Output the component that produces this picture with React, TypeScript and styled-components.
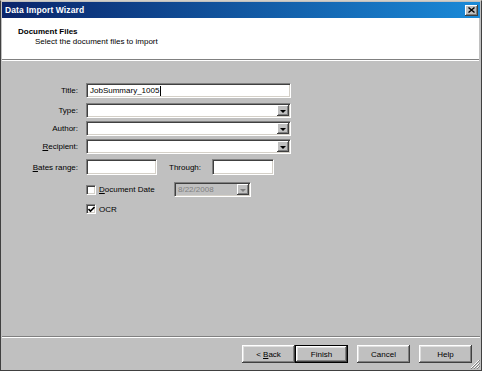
import React from 'react';
import styled, { createGlobalStyle } from 'styled-components';

const Global = createGlobalStyle`
  html, body { margin: 0; padding: 0; background: #c0c0c0; }
  body { font-family: "Liberation Sans", Arial, sans-serif; font-size: 8px; color: #000; }
  * { box-sizing: border-box; }
  u { text-decoration: underline; text-underline-offset: 1px; }
`;

const Window = styled.div`
  position: relative;
  width: 482px;
  height: 371px;
  display: flex;
  flex-direction: column;
  background: #c0c0c0;
  border: 1px solid #404040;
  border-top-color: #d4d0c8;
  padding: 1px;
`;

const TitleBar = styled.div`
  height: 16px;
  flex: none;
  display: flex;
  align-items: center;
  justify-content: space-between;
  padding: 0 2px 0 3px;
  background: linear-gradient(to right, #0a246a, #1a8ad8);
`;

const TitleText = styled.span`
  color: #fff;
  font-weight: bold;
  font-size: 8.5px;
  letter-spacing: 0.1px;
`;

const CloseButton = styled.div`
  width: 13px;
  height: 11px;
  background: #c0c0c0;
  box-shadow: inset -1px -1px #404040, inset 1px 1px #fff, inset -2px -2px #808080;
  display: flex;
  align-items: center;
  justify-content: center;
`;

const Header = styled.div`
  height: 42px;
  flex: none;
  background: #fff;
  margin-right: 1px;
  padding: 9px 0 0 16px;
  border-bottom: 1px solid #808080;
  box-shadow: 0 1px 0 #fff;
`;

const HeaderTitle = styled.div`
  font-weight: bold;
  font-size: 8px;
  line-height: 10px;
`;

const HeaderSub = styled.div`
  font-size: 8px;
  line-height: 10px;
  padding-left: 17px;
`;

const Content = styled.div`
  flex: 1;
  display: flex;
  flex-direction: column;
  padding-top: 1px;
`;

const Row = styled.div<{ $mt: number; $h: number }>`
  display: flex;
  align-items: center;
  margin-top: ${(p) => p.$mt}px;
  height: ${(p) => p.$h}px;
`;

const Label = styled.label`
  width: 76px;
  text-align: right;
  margin-right: 8px;
  white-space: nowrap;
`;

const InlineLabel = styled.label<{ $w: number }>`
  width: ${(p) => p.$w}px;
  margin-left: 12px;
  white-space: nowrap;
`;

const Field = styled.div<{ $w: number; $disabled?: boolean }>`
  position: relative;
  width: ${(p) => p.$w}px;
  height: 100%;
  background: ${(p) => (p.$disabled ? '#c0c0c0' : '#fff')};
  border: 1px solid;
  border-color: #808080 #fff #fff #808080;
  box-shadow: inset 1px 1px #404040, inset -1px -1px #d4d0c8;
  display: flex;
  align-items: center;
  padding: 0 2px 0 3px;
  color: ${(p) => (p.$disabled ? '#808080' : '#000')};
  white-space: nowrap;
`;

const Caret = styled.span`
  display: inline-block;
  width: 1px;
  height: 10px;
  background: #000;
  margin-left: 1px;
`;

const Spacer = styled.div`
  flex: 1;
`;

const DropButton = styled.div`
  width: 12px;
  height: calc(100% - 2px);
  margin-right: -1px;
  background: #c0c0c0;
  box-shadow: inset -1px -1px #404040, inset 1px 1px #fff, inset -2px -2px #808080;
  display: flex;
  align-items: center;
  justify-content: center;
`;

const Arrow = styled.div<{ $disabled?: boolean }>`
  width: 0;
  height: 0;
  border-left: 3px solid transparent;
  border-right: 3px solid transparent;
  border-top: 3px solid ${(p) => (p.$disabled ? '#808080' : '#000')};
  margin-top: 1px;
`;

const CheckGroup = styled.div<{ $w: number }>`
  display: flex;
  align-items: center;
  width: ${(p) => p.$w}px;
  margin-left: 84px;
`;

const CheckBox = styled.div`
  width: 10px;
  height: 10px;
  background: #fff;
  border: 1px solid;
  border-color: #808080 #fff #fff #808080;
  box-shadow: inset 1px 1px #404040, inset -1px -1px #d4d0c8;
  display: flex;
  align-items: center;
  justify-content: center;
  margin-right: 3px;
`;

const Footer = styled.div`
  height: 33px;
  flex: none;
  border-top: 1px solid #808080;
  box-shadow: inset 0 1px 0 #fff;
  display: flex;
  justify-content: flex-end;
  align-items: flex-start;
  padding: 8px 8px 0 0;
`;

const Button = styled.div<{ $default?: boolean; $gap?: number }>`
  width: 53px;
  height: 18px;
  margin-left: ${(p) => p.$gap ?? 0}px;
  background: #c0c0c0;
  display: flex;
  align-items: center;
  justify-content: center;
  white-space: pre;
  border: ${(p) => (p.$default ? '1px solid #000' : 'none')};
  box-shadow: inset -1px -1px #404040, inset 1px 1px #fff, inset -2px -2px #808080,
    inset 2px 2px #dfdfdf;
`;

const Grip = styled.svg`
  position: absolute;
  right: 1px;
  bottom: 1px;
`;

const Check = () => (
  <svg width="7" height="7" viewBox="0 0 7 7">
    <path d="M0.5 3 L2.5 5 L6.5 1" stroke="#000" strokeWidth="1.6" fill="none" />
  </svg>
);

const Select = ({ w }: { w: number }) => (
  <Field $w={w}>
    <Spacer />
    <DropButton>
      <Arrow />
    </DropButton>
  </Field>
);

export default function App() {
  return (
    <>
      <Global />
      <Window>
        <TitleBar>
          <TitleText>Data Import Wizard</TitleText>
          <CloseButton>
            <svg width="7" height="6" viewBox="0 0 7 6">
              <path d="M0.5 0.5 L6.5 5.5 M6.5 0.5 L0.5 5.5" stroke="#000" strokeWidth="1.4" />
            </svg>
          </CloseButton>
        </TitleBar>
        <Header>
          <HeaderTitle>Document Files</HeaderTitle>
          <HeaderSub>Select the document files to import</HeaderSub>
        </Header>
        <Content>
          <Row $mt={22} $h={15}>
            <Label>Title:</Label>
            <Field $w={205}>
              JobSummary_1005
              <Caret />
            </Field>
          </Row>
          <Row $mt={5} $h={15}>
            <Label>Type:</Label>
            <Select w={205} />
          </Row>
          <Row $mt={3} $h={15}>
            <Label>Author:</Label>
            <Select w={205} />
          </Row>
          <Row $mt={3} $h={15}>
            <Label>
              <u>R</u>ecipient:
            </Label>
            <Select w={205} />
          </Row>
          <Row $mt={5} $h={16}>
            <Label>
              <u>B</u>ates range:
            </Label>
            <Field $w={71} />
            <InlineLabel $w={43}>Through:</InlineLabel>
            <Field $w={62} />
          </Row>
          <Row $mt={7} $h={15}>
            <CheckGroup $w={88}>
              <CheckBox />
              <span>
                <u>D</u>ocument Date
              </span>
            </CheckGroup>
            <Field $w={77} $disabled>
              8/22/2008
              <Spacer />
              <DropButton>
                <Arrow $disabled />
              </DropButton>
            </Field>
          </Row>
          <Row $mt={7} $h={10}>
            <CheckGroup $w={60}>
              <CheckBox>
                <Check />
              </CheckBox>
              <span>OCR</span>
            </CheckGroup>
          </Row>
        </Content>
        <Footer>
          <Button>
            {'< '}
            <u>B</u>ack
          </Button>
          <Button $default>Finish</Button>
          <Button $gap={9}>Cancel</Button>
          <Button $gap={9}>Help</Button>
        </Footer>
        <Grip width="11" height="11" viewBox="0 0 11 11">
          <path d="M10 2 L2 10 M10 5 L5 10 M10 8 L8 10" stroke="#fff" strokeWidth="1" />
          <path d="M11 2 L2 11 M11 5 L5 11 M11 8 L8 11" stroke="#808080" strokeWidth="1" />
        </Grip>
      </Window>
    </>
  );
}
